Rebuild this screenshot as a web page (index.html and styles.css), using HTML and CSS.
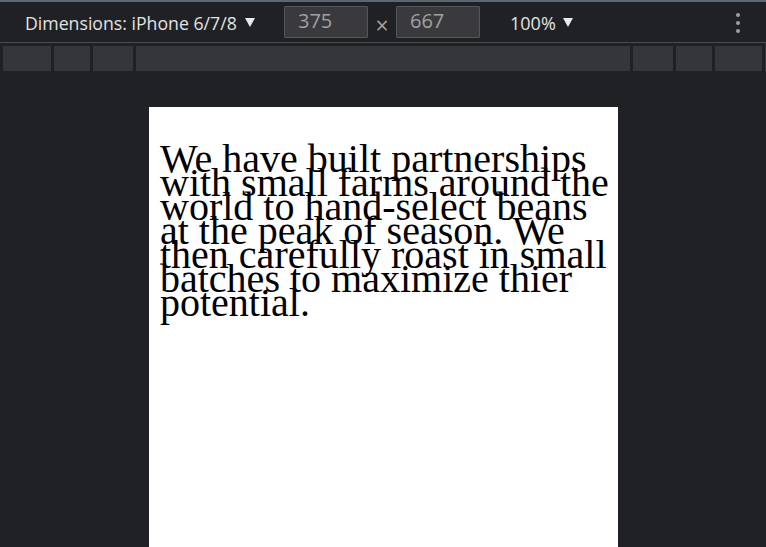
FILE: index.html
```html
<!DOCTYPE html>
<html>
<head>
<meta charset="utf-8">
<link rel="stylesheet" href="styles.css">
</head>
<body>
<div class="topline"></div>
<div class="toolbar">
  <div class="device">Dimensions: iPhone 6/7/8 <span class="tri"></span></div>
  <div class="dims">
    <div class="inp">375</div>
    <span class="times">×</span>
    <div class="inp">667</div>
  </div>
  <div class="zoom">100% <span class="tri"></span></div>
  <div class="more"><span></span><span></span><span></span></div>
</div>
<div class="media">
  <div class="seg s1"></div>
  <div class="seg s2"></div>
  <div class="seg s3"></div>
  <div class="seg s4"></div>
  <div class="seg s5"></div>
  <div class="seg s6"></div>
  <div class="seg s7"></div>
</div>
<div class="stage">
  <div class="viewport">
    <p class="copy">We have built partnerships with small farms around the world to hand-select beans at the peak of season. We then carefully roast in small batches to maximize thier potential.</p>
  </div>
</div>
</body>
</html>
```
FILE: styles.css
```css
html, body {
  margin: 0;
  padding: 0;
  background: #202124;
  overflow: hidden;
  height: 547px;
}
body {
  font-family: "Open Sans", "Noto Sans", sans-serif;
}
.topline {
  height: 2px;
  background: #5b6772;
}
.toolbar {
  height: 41px;
  box-sizing: border-box;
  border-bottom: 1px solid #4a4c50;
  display: flex;
  align-items: center;
  color: #e3e3e3;
  font-size: 17.7px;
  padding-top: 1px;
}
.device {
  margin-left: 25px;
  width: 259px;
  display: flex;
  align-items: center;
}
.tri {
  display: inline-block;
  width: 0;
  height: 0;
  border-left: 5px solid transparent;
  border-right: 5px solid transparent;
  border-top: 9px solid #e8eaed;
  margin-left: 8px;
}
.dims {
  display: flex;
  align-items: center;
  width: 226px;
  margin-top: -1px;
}
.inp {
  width: 84px;
  height: 32px;
  box-sizing: border-box;
  border: 1px solid #555659;
  background: #3a3a3c;
  color: #a0a0a0;
  font-size: 20px;
  padding-left: 13px;
  line-height: 27px;
  border-radius: 1px;
}
.times {
  width: 28px;
  text-align: center;
  color: #a0a0a0;
  font-size: 23px;
  padding-top: 6px;
}
.zoom {
  display: flex;
  align-items: center;
  font-size: 18px;
}
.zoom .tri { margin-left: 7px; }
.more {
  margin-left: auto;
  margin-right: 26px;
  display: flex;
  flex-direction: column;
  gap: 4px;
}
.more span {
  width: 4px;
  height: 4px;
  border-radius: 50%;
  background: #9aa0a6;
}
.media {
  display: flex;
  gap: 3px;
  padding: 3px 3px 0 3px;
  height: 25px;
  border-right: 1px solid #35363a;
}
.seg { background: #35363a; height: 25px; }
.s1 { width: 48px; }
.s2 { width: 36px; }
.s3 { width: 40px; }
.s4 { flex: 1; }
.s5 { width: 40px; }
.s6 { width: 36px; }
.s7 { width: 47px; }
.stage {
  display: flex;
  justify-content: center;
  padding-top: 36px;
  padding-left: 1px;
}
.viewport {
  width: 469px;
  height: 450px;
  background: #fff;
  box-sizing: border-box;
  padding: 40px 8px 0 11px;
}
.copy {
  margin: 0;
  font-family: "Liberation Serif", "Times New Roman", serif;
  font-size: 40px;
  line-height: 24px;
  color: #000;
}
```
